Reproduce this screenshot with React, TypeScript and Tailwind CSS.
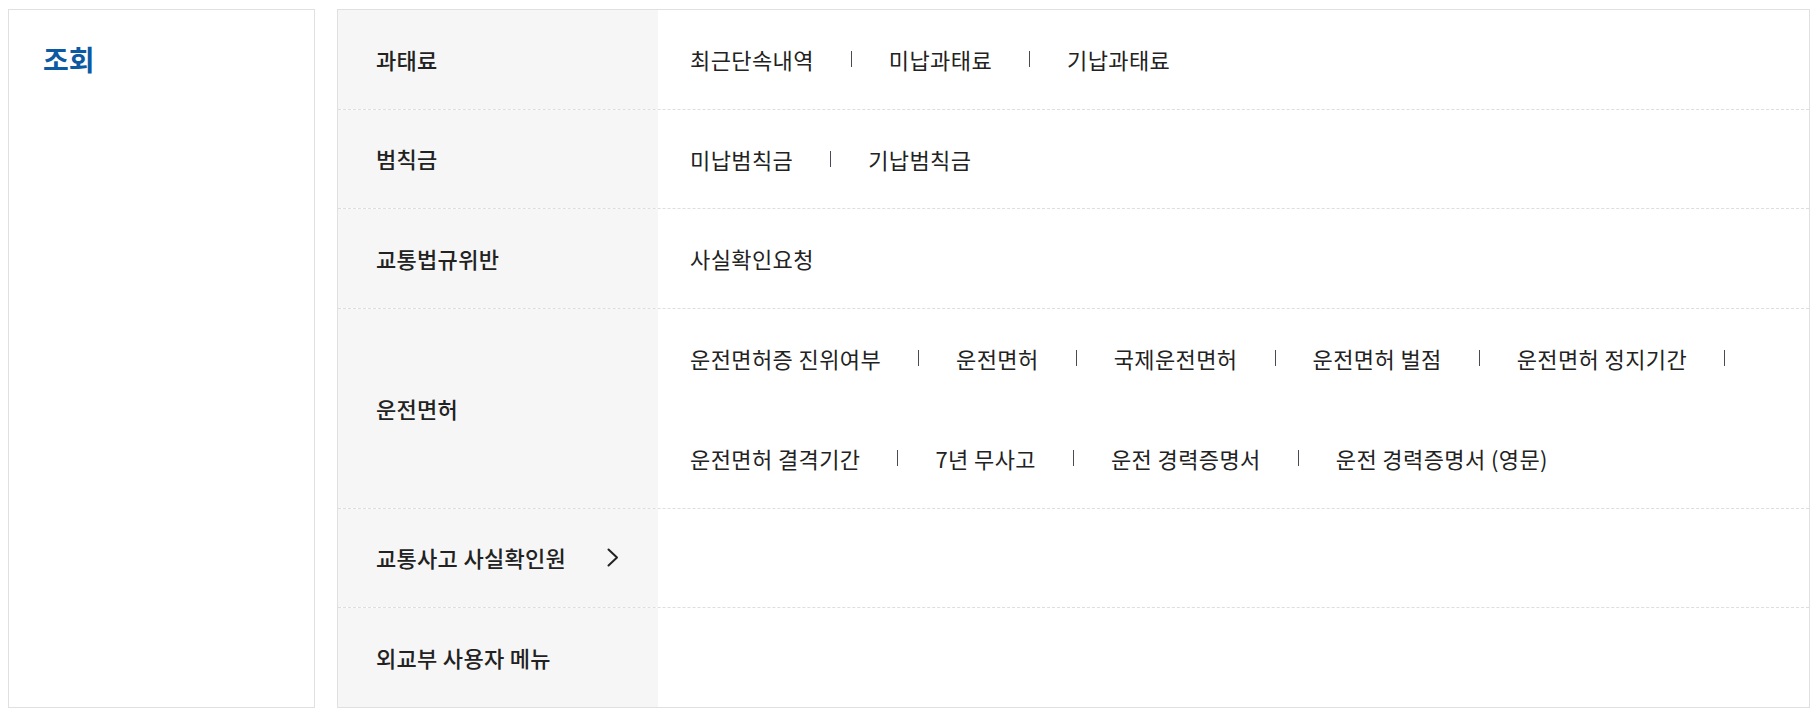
type Row = {
  label: string;
  items: string[];
  arrow?: boolean;
};

const ROWS: Row[] = [
  { label: '과태료', items: ['최근단속내역', '미납과태료', '기납과태료'] },
  { label: '범칙금', items: ['미납범칙금', '기납범칙금'] },
  { label: '교통법규위반', items: ['사실확인요청'] },
  {
    label: '운전면허',
    items: [
      '운전면허증 진위여부',
      '운전면허',
      '국제운전면허',
      '운전면허 벌점',
      '운전면허 정지기간',
      '운전면허 결격기간',
      '7년 무사고',
      '운전 경력증명서',
      '운전 경력증명서 (영문)',
    ],
  },
  { label: '교통사고 사실확인원', items: [], arrow: true },
  { label: '외교부 사용자 메뉴', items: [] },
];

function Sep() {
  return <span className="mx-[37px] inline-block h-[16px] w-px bg-[#4a4a55]" />;
}

function Chevron() {
  return (
    <svg width="12" height="19" viewBox="0 0 12 19" fill="none" className="ml-[41px]">
      <polyline
        points="1.5,1.5 10,9.5 1.5,17.5"
        stroke="#222"
        strokeWidth="2"
        strokeLinecap="round"
        strokeLinejoin="round"
      />
    </svg>
  );
}

export default function App() {
  return (
    <div
      className="flex gap-[22px] bg-white px-[8px] pt-[9px] pb-[9px] text-[#222]"
      style={{ fontFamily: '"Noto Sans CJK KR", "Noto Sans", sans-serif' }}
    >
      <aside className="w-[307px] shrink-0 border border-[#e0e0e0] px-[34px] pt-[29px]">
        <h2 className="text-[28px] font-bold leading-[40px] text-[#0b5aa2]">조회</h2>
      </aside>

      <div className="flex-1 border border-[#e0e0e0]">
        {ROWS.map((row, i) => (
          <div
            key={row.label}
            className={`flex ${i > 0 ? 'border-t border-dashed border-[#dedede]' : ''}`}
          >
            <div className="flex w-[320px] shrink-0 items-center bg-[#f6f6f6] px-[38px] text-[22px] font-medium tracking-[0.3px]">
              <span>{row.label}</span>
              {row.arrow && <Chevron />}
            </div>
            <div className="flex flex-1 flex-wrap items-center gap-y-[78px] py-[38px] pl-[32px] pr-[20px] text-[22px] leading-[22.5px] tracking-[0.4px]">
              {row.items.length === 0 && <span className="h-[22.5px]" />}
              {row.items.map((item, j) => (
                <span key={item} className="flex items-center">
                  <span>{item}</span>
                  {j < row.items.length - 1 && <Sep />}
                </span>
              ))}
            </div>
          </div>
        ))}
      </div>
    </div>
  );
}
